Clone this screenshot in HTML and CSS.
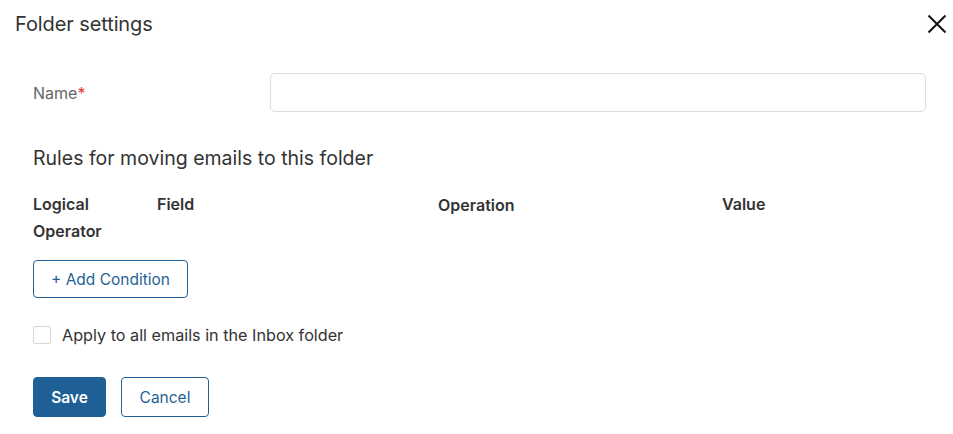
FILE: index.html
```html
<!DOCTYPE html>
<html>
<head>
<meta charset="utf-8">
<link rel="stylesheet" href="styles.css">
</head>
<body>
<div class="dialog">
  <div class="header">
    <div class="title">Folder settings</div>
    <button class="close" aria-label="Close">
      <svg width="20" height="20" viewBox="0 0 20 20"><path d="M1.5 1.5 L18.5 18.5 M18.5 1.5 L1.5 18.5" stroke="#111" stroke-width="2" fill="none"/></svg>
    </button>
  </div>
  <div class="body">
    <div class="field-row">
      <label class="label">Name<span class="req">*</span></label>
      <input class="input" type="text">
    </div>
    <div class="section-title">Rules for moving emails to this folder</div>
    <div class="cols">
      <div class="col c1">Logical<br>Operator</div>
      <div class="col c2">Field</div>
      <div class="col c3">Operation</div>
      <div class="col c4">Value</div>
    </div>
    <button class="btn outline add">+ Add Condition</button>
    <label class="check">
      <span class="box"></span>
      <span>Apply to all emails in the Inbox folder</span>
    </label>
    <div class="actions">
      <button class="btn primary">Save</button>
      <button class="btn outline cancel">Cancel</button>
    </div>
  </div>
</div>
</body>
</html>
```
FILE: styles.css
```css
* { box-sizing: border-box; }
html, body { margin: 0; padding: 0; background: #fff; }
body { font-family: Inter, "Noto Sans", sans-serif; color: #333; }
.dialog { width: 953px; height: 434px; }
.header { display: flex; justify-content: space-between; align-items: center; padding: 10px 6px 0 15px; height: 38px; }
.title { font-size: 20px; color: #333; letter-spacing: -0.1px; }
.close { background: none; border: 0; padding: 0; width: 20px; height: 20px; display: flex; margin-top: 0; }
.body { padding: 0 27px 0 33px; }
.field-row { display: flex; align-items: center; margin-top: 35px; }
.label { width: 237px; font-size: 16px; color: #666; }
.req { color: #e53935; }
.input { flex: 1; height: 39px; border: 1px solid #dcdcdc; border-radius: 5px; outline: none; font: inherit; }
.section-title { font-size: 19.5px; color: #333; margin-top: 35px; line-height: 22px; }
.cols { display: grid; grid-template-columns: 124px 281px 284px 1fr; margin-top: 22px; font-size: 16px; font-weight: 600; color: #333; line-height: 27px; }
.c3 { padding-top: 1px; }
.btn { font-family: inherit; font-size: 15.5px; border-radius: 4px; cursor: pointer; }
.outline { background: #fff; border: 1px solid #1f6196; color: #1f6196; }
.add { height: 38px; width: 155px; margin-top: 15px; display: block; }
.check { display: flex; align-items: center; gap: 11px; margin-top: 27px; font-size: 16.2px; color: #333; }
.box { width: 18px; height: 18px; border: 1px solid #d8d8d8; border-radius: 2px; }
.actions { display: flex; gap: 15px; margin-top: 32px; }
.primary { background: #1f6196; border: 1px solid #1f6196; color: #fff; height: 40px; width: 73px; font-weight: 600; }
.cancel { height: 40px; width: 88px; }
```
